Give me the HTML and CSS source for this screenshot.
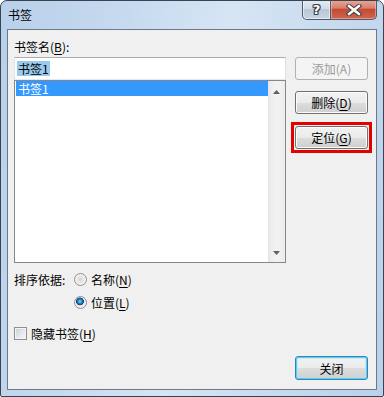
FILE: index.html
```html
<!DOCTYPE html>
<html lang="zh-CN">
<head>
<meta charset="utf-8">
<title>书签</title>
<link rel="stylesheet" href="styles.css">
</head>
<body>
<div class="window">
  <div class="titlebar">
    <span class="title">书签</span>
    <div class="caps">
      <div class="cap help"><span class="qmark">?</span></div>
      <div class="cap shut">
        <svg width="16" height="12" viewBox="0 0 16 12">
          <path d="M3 2 L13 10 M13 2 L3 10" stroke="#3a3f48" stroke-width="4.4" stroke-linecap="square" fill="none"/>
          <path d="M3 2 L13 10 M13 2 L3 10" stroke="#ffffff" stroke-width="2.4" stroke-linecap="square" fill="none"/>
        </svg>
      </div>
    </div>
  </div>
  <div class="client">
    <div class="top">
      <div class="left">
        <div class="label">书签名(<u>B</u>):</div>
        <div class="textbox"><span class="sel">书签1</span></div>
        <div class="listbox">
          <div class="items">
            <div class="item selected">书签1</div>
          </div>
          <div class="scrollbar">
            <svg width="7" height="4" viewBox="0 0 7 4"><polygon points="3.5,0 7,4 0,4" fill="#606060"/></svg>
            <svg width="7" height="4" viewBox="0 0 7 4"><polygon points="0,0 7,0 3.5,4" fill="#606060"/></svg>
          </div>
        </div>
      </div>
      <div class="right">
        <button class="btn" disabled>添加(A)</button>
        <button class="btn">删除(<u>D</u>)</button>
        <button class="btn marked">定位(<u>G</u>)</button>
      </div>
    </div>
    <div class="sort">
      <div class="sort-label">排序依据:</div>
      <div class="options">
        <div class="option"><span class="radio"></span><span>名称(<u>N</u>)</span></div>
        <div class="option"><span class="radio on"></span><span>位置(<u>L</u>)</span></div>
      </div>
    </div>
    <div class="check-row"><span class="checkbox"></span><span>隐藏书签(<u>H</u>)</span></div>
    <button class="btn default">关闭</button>
  </div>
</div>
</body>
</html>
```
FILE: styles.css
```css
html, body {
  margin: 0;
  padding: 0;
  background: #ffffff;
}

body {
  font-family: "Noto Sans CJK SC", "Microsoft YaHei", sans-serif;
  font-size: 12px;
  color: #000;
}

u {
  text-decoration-thickness: 1px;
  text-underline-offset: 2px;
}

.window {
  width: 384px;
  height: 397px;
  box-sizing: border-box;
  border: 1px solid #3a4350;
  border-radius: 7px 7px 2px 2px;
  background: linear-gradient(100deg, #b8d0ea 0%, #c6daef 28%, #d6e5f4 52%, #c8dbef 74%, #bad1eb 100%);
  display: flex;
  flex-direction: column;
  overflow: hidden;
}

.titlebar {
  height: 28px;
  flex: none;
  display: flex;
  justify-content: space-between;
  align-items: flex-start;
}

.title {
  padding: 6px 0 0 7px;
  line-height: 16px;
}

.caps {
  display: flex;
  margin-right: 6px;
  margin-top: -1px;
}

.cap {
  height: 20px;
  box-sizing: border-box;
  border: 1px solid #4f5b6a;
  border-top: none;
  display: flex;
  align-items: center;
  justify-content: center;
}

.help {
  width: 29px;
  border-radius: 0 0 0 5px;
  background: linear-gradient(#e4ebf3 0%, #d2dce7 45%, #b8c6d6 50%, #c9d5e2 100%);
  box-shadow: inset 0 0 0 1px rgba(255, 255, 255, 0.5);
}

.qmark {
  font-family: "DejaVu Sans", sans-serif;
  font-weight: bold;
  font-size: 13px;
  line-height: 14px;
  color: #fff;
  text-shadow: 1px 0 #3a3f48, -1px 0 #3a3f48, 0 1px #3a3f48, 0 -1px #3a3f48, 1px 1px #3a3f48, -1px -1px #3a3f48, 1px -1px #3a3f48, -1px 1px #3a3f48;
}

.shut {
  width: 47px;
  margin-left: -1px;
  border-radius: 0 0 5px 0;
  background: linear-gradient(#e9a898 0%, #d9806f 42%, #c44a36 50%, #d0654c 100%);
  box-shadow: inset 0 0 0 1px rgba(255, 220, 210, 0.45);
}

.client {
  flex: 1;
  margin: 0 6px 6px;
  border: 1px solid #6d7989;
  background: #f0f0f0;
  padding: 8px 8px 9px 6px;
  display: flex;
  flex-direction: column;
}

.top {
  display: flex;
  gap: 9px;
}

.left {
  width: 272px;
  display: flex;
  flex-direction: column;
}

.label {
  height: 19px;
  line-height: 17px;
}

.textbox {
  height: 23px;
  box-sizing: border-box;
  border: 1px solid;
  border-color: #abadb3 #dbdfe6 #e3e9ef #e2e3ea;
  background: #fff;
  padding: 2px 0 0 2px;
}

.sel {
  display: inline-block;
  background: #99c9ef;
  line-height: 15px;
  padding: 0 1px;
}

.listbox {
  height: 183px;
  box-sizing: border-box;
  border: 1px solid #828790;
  background: #fff;
  display: flex;
}

.items {
  flex: 1;
  padding: 0 0 0 1px;
}

.item {
  line-height: 15px;
  padding-left: 2px;
}

.item.selected {
  background: #3399ff;
  color: #fff;
}

.scrollbar {
  width: 17px;
  background: linear-gradient(to right, #e2e2e2 0, #ececec 2px, #f3f3f3 9px, #ececec 100%);
  display: flex;
  flex-direction: column;
  justify-content: space-between;
  align-items: center;
  padding: 9px 0 7px;
  box-sizing: border-box;
}

.scrollbar svg {
  display: block;
}

.right {
  padding-top: 19px;
  display: flex;
  flex-direction: column;
  gap: 11px;
}

.btn {
  width: 73px;
  height: 23px;
  box-sizing: border-box;
  font: inherit;
  color: #000;
  padding: 0;
  border: 1px solid #707070;
  border-radius: 3px;
  background: linear-gradient(#f2f2f2 0%, #ebebeb 50%, #dddddd 51%, #cfcfcf 100%);
  box-shadow: inset 0 0 0 1px #fbfbfb;
  line-height: 19px;
}

.btn:disabled {
  border-color: #adb2b5;
  background: #f4f4f4;
  color: #9a9a9a;
  box-shadow: none;
}

.marked {
  margin-top: 1px;
  position: relative;
}

.marked::after {
  content: "";
  position: absolute;
  left: -5px;
  right: -5px;
  top: -5px;
  bottom: -5px;
  border: 3px solid #e20000;
  pointer-events: none;
}

.sort {
  margin-top: 8px;
  display: flex;
  line-height: 17px;
}

.sort-label {
  width: 60px;
}

.options {
  display: flex;
  flex-direction: column;
  gap: 6px;
}

.option {
  display: flex;
  align-items: center;
  gap: 4px;
}

.radio {
  width: 13px;
  height: 13px;
  box-sizing: border-box;
  border-radius: 50%;
  border: 1px solid #8e8f8f;
  background: radial-gradient(circle at 50% 50%, #d4d4d4 0, #e6e6e6 3px, #f6f6f6 6px);
}

.radio.on {
  background:
    radial-gradient(circle at 45% 40%, #9bdcf8 0, #3a9ad8 1.5px, #155e9e 3px, #0d3f76 3.6px, rgba(13, 63, 118, 0) 4.2px),
    radial-gradient(circle at 50% 50%, #d4d4d4 0, #e6e6e6 3px, #f6f6f6 6px);
}

.check-row {
  margin-top: 14px;
  display: flex;
  align-items: center;
  gap: 4px;
  line-height: 17px;
}

.checkbox {
  width: 13px;
  height: 13px;
  box-sizing: border-box;
  border: 1px solid #8e8f8f;
  background: linear-gradient(135deg, #c9cdd3 0%, #e4e6e9 50%, #f7f7f7 100%);
  box-shadow: inset 0 0 0 1px #f4f4f4;
}

.default {
  align-self: flex-end;
  margin-top: 14px;
  height: 24px;
  border-color: #3c7fb1;
  box-shadow: inset 0 0 0 1px #4fd3f8, inset 0 0 0 2px rgba(160, 230, 250, 0.5);
}
```
